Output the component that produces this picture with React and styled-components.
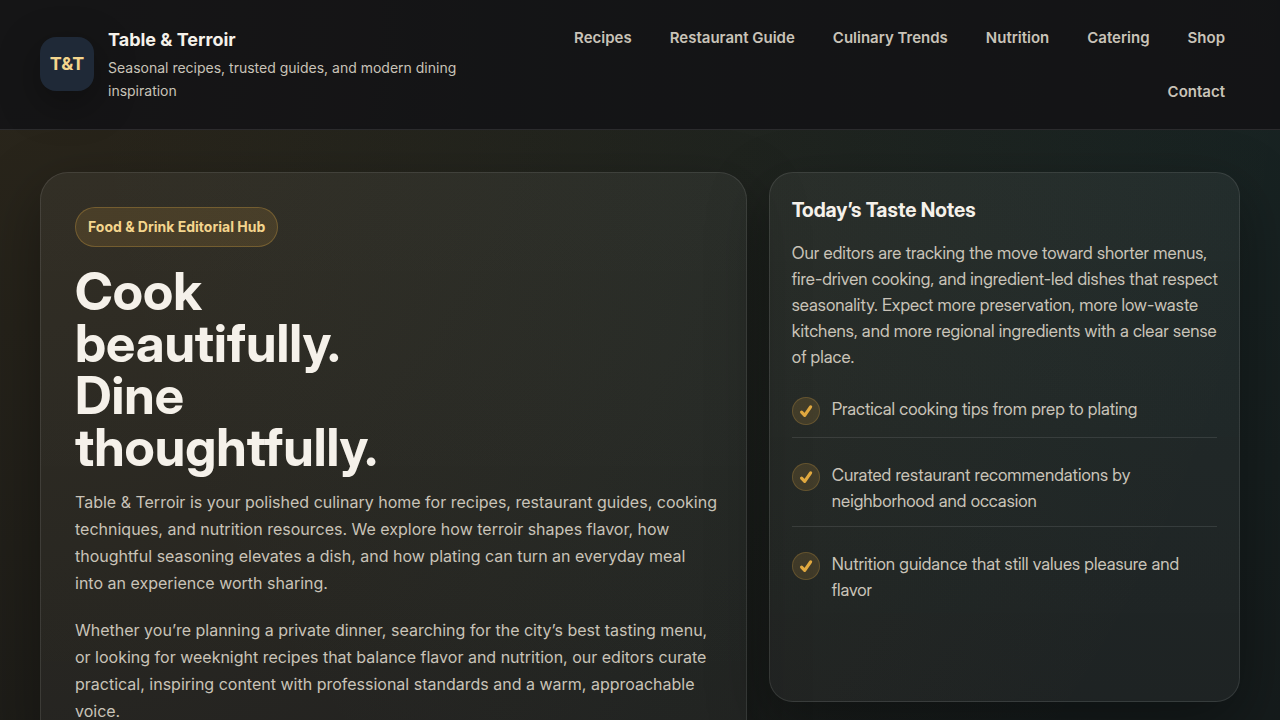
import styled, { createGlobalStyle } from "styled-components";

const links = [
  "Recipes",
  "Restaurant Guide",
  "Culinary Trends",
  "Nutrition",
  "Catering",
  "Shop",
  "Contact",
];

const notes = [
  "Practical cooking tips from prep to plating",
  "Curated restaurant recommendations by neighborhood and occasion",
  "Nutrition guidance that still values pleasure and flavor",
];

export default function App() {
  return (
    <>
      <GlobalStyle />
      <Header>
        <HeaderInner>
          <Brand href="#home">
            <Logo>T&amp;T</Logo>
            <BrandText>
              <BrandName>Table &amp; Terroir</BrandName>
              <Tagline>
                Seasonal recipes, trusted guides, and modern dining inspiration
              </Tagline>
            </BrandText>
          </Brand>
          <Nav aria-label="Main">
            {links.map((link) => (
              <NavLink key={link} href="#">
                {link}
              </NavLink>
            ))}
          </Nav>
        </HeaderInner>
      </Header>
      <Main>
        <HeroCard>
          <Badge>Food &amp; Drink Editorial Hub</Badge>
          <Title>Cook beautifully. Dine thoughtfully.</Title>
          <Lead>
            Table &amp; Terroir is your polished culinary home for recipes,
            restaurant guides, cooking techniques, and nutrition resources. We
            explore how terroir shapes flavor, how thoughtful seasoning elevates
            a dish, and how plating can turn an everyday meal into&nbsp;an
            experience worth sharing.
          </Lead>
          <Lead>
            Whether you’re planning a private dinner, searching for the city’s
            best tasting menu, or looking for weeknight recipes that balance
            flavor and nutrition, our editors curate practical, inspiring
            content with professional standards and a warm, approachable voice.
          </Lead>
        </HeroCard>
        <NotesCard>
          <NotesTitle>Today’s Taste Notes</NotesTitle>
          <NotesText>
            Our editors are tracking the move toward shorter menus, fire-driven
            cooking, and ingredient-led dishes that respect seasonality. Expect
            more preservation, more low-waste kitchens, and more regional
            ingredients with a clear sense of place.
          </NotesText>
          <NotesList>
            {notes.map((note) => (
              <NoteItem key={note}>
                <Check>
                  <svg width="26" height="26" viewBox="0 0 26 26" aria-hidden="true">
                    <path
                      d="M8.6 14.2 11.7 17.4 17.6 8.9"
                      fill="none"
                      stroke="currentColor"
                      strokeWidth="3.2"
                      strokeLinecap="round"
                      strokeLinejoin="round"
                    />
                  </svg>
                </Check>
                <span>{note}</span>
              </NoteItem>
            ))}
          </NotesList>
        </NotesCard>
      </Main>
    </>
  );
}

const GlobalStyle = createGlobalStyle`
  * {
    box-sizing: border-box;
  }

  body {
    margin: 0;
    min-height: 100vh;
    font-family: Inter, "Liberation Sans", sans-serif;
    font-size: 16px;
    line-height: 26px;
    color: #f5f1ea;
    background:
      radial-gradient(circle at top left, rgba(217, 164, 65, 0.12), transparent 1300px),
      radial-gradient(circle at top right, rgba(60, 142, 130, 0.12), transparent 1200px),
      #131516;
  }

  h1, h2, p, ul {
    margin: 0;
  }
`;

const Header = styled.header`
  position: sticky;
  top: 0;
  z-index: 1;
  background-color: rgba(19, 20, 22, 0.92);
  border-bottom: 1px solid rgba(255, 255, 255, 0.1);
`;

const HeaderInner = styled.div`
  max-width: 1280px;
  margin: 0 auto;
  padding: 15px 40px 14px;

  display: flex;
  align-items: center;
  justify-content: space-between;
  gap: 24px;
`;

const Brand = styled.a`
  display: flex;
  align-items: center;
  gap: 14px;
  padding-bottom: 2px;
  color: inherit;
  text-decoration: none;
`;

const Logo = styled.span`
  flex: none;
  width: 54px;
  height: 54px;
  border-radius: 16px;

  display: flex;
  justify-content: center;
  align-items: center;

  background-color: #1f2937;
  color: #f4d58d;
  font-size: 18px;
  font-weight: 700;
  box-shadow: 0 12px 40px rgba(0, 0, 0, 0.35);
`;

const BrandText = styled.span`
  display: flex;
  flex-direction: column;
  gap: 4px;
  max-width: 360px;
  padding-top: 2px;
`;

const BrandName = styled.strong`
  font-size: 18px;
  line-height: 24px;
  font-weight: 700;
`;

const Tagline = styled.span`
  font-size: 14px;
  line-height: 23px;
  color: #c9c3b8;
`;

const Nav = styled.nav`
  flex: 1;
  display: flex;
  flex-wrap: wrap;
  justify-content: flex-end;
  gap: 8px;
`;

const NavLink = styled.a`
  padding: 10px 14px;
  border: 1px solid transparent;
  border-radius: 23px;
  font-size: 15px;
  line-height: 24px;
  font-weight: 600;
  color: #c9c3b8;
  text-decoration: none;
`;

const Main = styled.main`
  max-width: 1280px;
  margin: 0 auto;
  padding: 42px 40px;

  display: grid;
  grid-template-columns: 3fr 2fr;
  align-items: start;
  gap: 22px;
`;

const Card = styled.section`
  border: 1px solid rgba(255, 255, 255, 0.1);
  background: linear-gradient(
    180deg,
    rgba(255, 255, 255, 0.05),
    rgba(255, 255, 255, 0.04)
  );
  box-shadow: 0 20px 60px rgba(0, 0, 0, 0.35);
`;

const HeroCard = styled(Card)`
  border-radius: 28px;
  padding: 34px 26px 34px 34px;
`;

const Badge = styled.span`
  display: inline-block;
  padding: 8px 12px;
  border: 1px solid rgba(217, 164, 65, 0.3);
  border-radius: 20px;
  background-color: rgba(217, 164, 65, 0.14);
  color: #f4d58d;
  font-size: 14px;
  line-height: 22px;
  font-weight: 700;
`;

const Title = styled.h1`
  max-width: 340px;
  margin: 19px 0 15px;
  font-family: "Inter Display", Inter, sans-serif;
  font-size: 52px;
  line-height: 52px;
  font-weight: 700;
`;

const Lead = styled.p`
  line-height: 27px;
  color: #c9c3b8;

  & + & {
    margin-top: 20px;
  }
`;

const NotesCard = styled(Card)`
  min-height: 530px;
  border-radius: 24px;
  padding: 22px 18px 22px 22px;
  font-family: "Inter Display", Inter, sans-serif;
`;

const NotesTitle = styled.h2`
  margin-bottom: 14px;
  font-size: 20px;
  line-height: 31px;
  font-weight: 700;
`;

const NotesText = styled.p`
  font-size: 17px;
  color: #c9c3b8;
`;

const NotesList = styled.ul`
  margin-top: 14px;
  padding: 0 4px 0 0;
  list-style: none;
  font-size: 17px;

  display: grid;
  gap: 12px;
`;

const NoteItem = styled.li`
  padding: 12px 0;
  color: #c9c3b8;

  display: flex;
  align-items: flex-start;
  gap: 12px;

  &:not(:last-child) {
    border-bottom: 1px solid rgba(255, 255, 255, 0.1);
  }
`;

const Check = styled.span`
  flex: none;
  width: 28px;
  height: 28px;
  margin-top: 1px;
  border: 1px solid rgba(217, 164, 65, 0.24);
  border-radius: 50%;

  display: flex;
  justify-content: center;
  align-items: center;

  background-color: rgba(217, 164, 65, 0.16);
  color: #e0a83f;
`;
